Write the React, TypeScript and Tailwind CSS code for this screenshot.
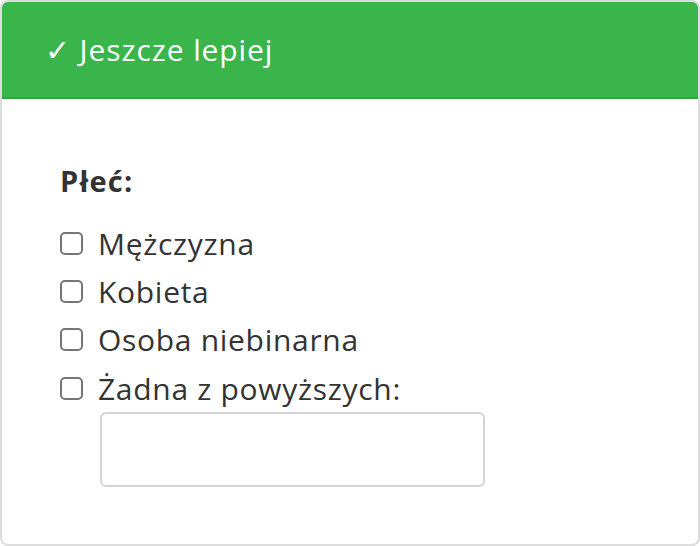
export default function App() {
  const options = ['Mężczyzna', 'Kobieta', 'Osoba niebinarna', 'Żadna z powyższych:']

  return (
    <div className="h-[546px] w-[700px] bg-white font-['Open_Sans','Noto_Sans',sans-serif]">
      <div className="h-full overflow-hidden rounded-[8px] border-2 border-[#dcdcdc]">
        <div className="flex h-[97px] items-center border-b-2 border-[#33a544] bg-[#3ab54b] pl-[43px] text-[30px] tracking-[0.9px] text-white">
          ✓ Jeszcze lepiej
        </div>
        <div className="pl-[58px] pt-[64px] text-[#333]">
          <div className="text-[29px] font-bold leading-[36px] tracking-[1.2px]">Płeć:</div>
          <div className="mt-[20px] flex flex-col">
            {options.map((label) => (
              <label key={label} className="flex h-[48.3px] items-center gap-[15px] text-[30px] tracking-[0.7px]">
                <span className="h-[23px] w-[23px] shrink-0 rounded-[5px] border-2 border-[#767676]" />
                <span>{label}</span>
              </label>
            ))}
          </div>
          <div className="ml-[40px] mt-0 h-[75px] w-[385px] rounded-[6px] border-2 border-[#d4d4d4]" />
        </div>
      </div>
    </div>
  )
}
